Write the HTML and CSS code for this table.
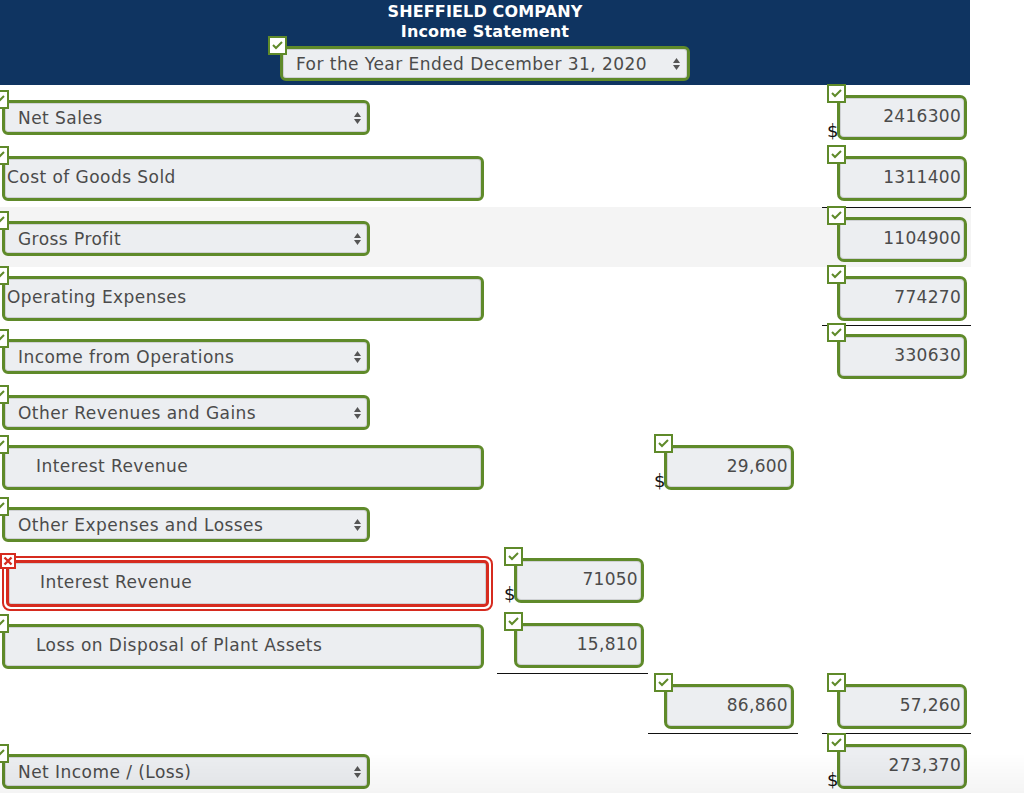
FILE: index.html
```html
<!DOCTYPE html>
<html>
<head>
<meta charset="utf-8">
<title>Sheffield Company Income Statement</title>
<link rel="stylesheet" href="styles.css">
</head>
<body>
<div class="sheet">
  <header class="hd">
    <div class="hd-title">SHEFFIELD COMPANY</div>
    <div class="hd-title">Income Statement</div>
    <div class="hd-row">
      <div class="field select sel-date">
        <svg class="badge" width="19" height="19" viewBox="0 0 19 19"><rect x="1" y="1" width="17" height="17" fill="#fff" stroke="#5f8a2a" stroke-width="2"/><polyline points="5,9 8,12 14,6" fill="none" stroke="#5f8a2a" stroke-width="2"/></svg>
        <span>For the Year Ended December 31, 2020</span>
        <svg class="arr" width="7" height="12" viewBox="0 0 7 12"><polygon points="0,5 3.5,0 7,5" fill="#555"/><polygon points="0,7 7,7 3.5,12" fill="#555"/></svg>
      </div>
    </div>
  </header>

  <div class="row r1">
    <div class="cell a">
      <div class="field select">
        <svg class="badge" width="19" height="19" viewBox="0 0 19 19"><rect x="1" y="1" width="17" height="17" fill="#fff" stroke="#5f8a2a" stroke-width="2"/><polyline points="5,9 8,12 14,6" fill="none" stroke="#5f8a2a" stroke-width="2"/></svg>
        <span>Net Sales</span>
        <svg class="arr" width="7" height="12" viewBox="0 0 7 12"><polygon points="0,5 3.5,0 7,5" fill="#555"/><polygon points="0,7 7,7 3.5,12" fill="#555"/></svg>
      </div>
    </div>
    <div class="cell b"></div>
    <div class="cell c"></div>
    <div class="gap"></div>
    <div class="cell d">
      <div class="num">
        <svg class="badge nb" width="19" height="19" viewBox="0 0 19 19"><rect x="1" y="1" width="17" height="17" fill="#fff" stroke="#5f8a2a" stroke-width="2"/><polyline points="5,9 8,12 14,6" fill="none" stroke="#5f8a2a" stroke-width="2"/></svg>
        <span class="dollar">$</span>2416300
      </div>
    </div>
  </div>

  <div class="row r2">
    <div class="cell a">
      <div class="field input">
        <svg class="badge" width="19" height="19" viewBox="0 0 19 19"><rect x="1" y="1" width="17" height="17" fill="#fff" stroke="#5f8a2a" stroke-width="2"/><polyline points="5,9 8,12 14,6" fill="none" stroke="#5f8a2a" stroke-width="2"/></svg>
        <span>Cost of Goods Sold</span>
      </div>
    </div>
    <div class="cell b"></div>
    <div class="cell c"></div>
    <div class="gap"></div>
    <div class="cell d">
      <div class="num">
        <svg class="badge nb" width="19" height="19" viewBox="0 0 19 19"><rect x="1" y="1" width="17" height="17" fill="#fff" stroke="#5f8a2a" stroke-width="2"/><polyline points="5,9 8,12 14,6" fill="none" stroke="#5f8a2a" stroke-width="2"/></svg>
        1311400
      </div>
    </div>
  </div>

  <div class="row r3 band">
    <div class="cell a">
      <div class="field select">
        <svg class="badge" width="19" height="19" viewBox="0 0 19 19"><rect x="1" y="1" width="17" height="17" fill="#fff" stroke="#5f8a2a" stroke-width="2"/><polyline points="5,9 8,12 14,6" fill="none" stroke="#5f8a2a" stroke-width="2"/></svg>
        <span>Gross Profit</span>
        <svg class="arr" width="7" height="12" viewBox="0 0 7 12"><polygon points="0,5 3.5,0 7,5" fill="#555"/><polygon points="0,7 7,7 3.5,12" fill="#555"/></svg>
      </div>
    </div>
    <div class="cell b"></div>
    <div class="cell c"></div>
    <div class="gap"></div>
    <div class="cell d rule-top">
      <div class="num">
        <svg class="badge nb" width="19" height="19" viewBox="0 0 19 19"><rect x="1" y="1" width="17" height="17" fill="#fff" stroke="#5f8a2a" stroke-width="2"/><polyline points="5,9 8,12 14,6" fill="none" stroke="#5f8a2a" stroke-width="2"/></svg>
        1104900
      </div>
    </div>
  </div>

  <div class="row r4">
    <div class="cell a">
      <div class="field input">
        <svg class="badge" width="19" height="19" viewBox="0 0 19 19"><rect x="1" y="1" width="17" height="17" fill="#fff" stroke="#5f8a2a" stroke-width="2"/><polyline points="5,9 8,12 14,6" fill="none" stroke="#5f8a2a" stroke-width="2"/></svg>
        <span>Operating Expenses</span>
      </div>
    </div>
    <div class="cell b"></div>
    <div class="cell c"></div>
    <div class="gap"></div>
    <div class="cell d">
      <div class="num">
        <svg class="badge nb" width="19" height="19" viewBox="0 0 19 19"><rect x="1" y="1" width="17" height="17" fill="#fff" stroke="#5f8a2a" stroke-width="2"/><polyline points="5,9 8,12 14,6" fill="none" stroke="#5f8a2a" stroke-width="2"/></svg>
        774270
      </div>
    </div>
  </div>

  <div class="row r5">
    <div class="cell a">
      <div class="field select">
        <svg class="badge" width="19" height="19" viewBox="0 0 19 19"><rect x="1" y="1" width="17" height="17" fill="#fff" stroke="#5f8a2a" stroke-width="2"/><polyline points="5,9 8,12 14,6" fill="none" stroke="#5f8a2a" stroke-width="2"/></svg>
        <span>Income from Operations</span>
        <svg class="arr" width="7" height="12" viewBox="0 0 7 12"><polygon points="0,5 3.5,0 7,5" fill="#555"/><polygon points="0,7 7,7 3.5,12" fill="#555"/></svg>
      </div>
    </div>
    <div class="cell b"></div>
    <div class="cell c"></div>
    <div class="gap"></div>
    <div class="cell d rule-top">
      <div class="num">
        <svg class="badge nb" width="19" height="19" viewBox="0 0 19 19"><rect x="1" y="1" width="17" height="17" fill="#fff" stroke="#5f8a2a" stroke-width="2"/><polyline points="5,9 8,12 14,6" fill="none" stroke="#5f8a2a" stroke-width="2"/></svg>
        330630
      </div>
    </div>
  </div>

  <div class="row r6">
    <div class="cell a">
      <div class="field select">
        <svg class="badge" width="19" height="19" viewBox="0 0 19 19"><rect x="1" y="1" width="17" height="17" fill="#fff" stroke="#5f8a2a" stroke-width="2"/><polyline points="5,9 8,12 14,6" fill="none" stroke="#5f8a2a" stroke-width="2"/></svg>
        <span>Other Revenues and Gains</span>
        <svg class="arr" width="7" height="12" viewBox="0 0 7 12"><polygon points="0,5 3.5,0 7,5" fill="#555"/><polygon points="0,7 7,7 3.5,12" fill="#555"/></svg>
      </div>
    </div>
    <div class="cell b"></div>
    <div class="cell c"></div>
    <div class="gap"></div>
    <div class="cell d"></div>
  </div>

  <div class="row r7">
    <div class="cell a">
      <div class="field input indent">
        <svg class="badge" width="19" height="19" viewBox="0 0 19 19"><rect x="1" y="1" width="17" height="17" fill="#fff" stroke="#5f8a2a" stroke-width="2"/><polyline points="5,9 8,12 14,6" fill="none" stroke="#5f8a2a" stroke-width="2"/></svg>
        <span>Interest Revenue</span>
      </div>
    </div>
    <div class="cell b"></div>
    <div class="cell c">
      <div class="num">
        <svg class="badge nb" width="19" height="19" viewBox="0 0 19 19"><rect x="1" y="1" width="17" height="17" fill="#fff" stroke="#5f8a2a" stroke-width="2"/><polyline points="5,9 8,12 14,6" fill="none" stroke="#5f8a2a" stroke-width="2"/></svg>
        <span class="dollar">$</span>29,600
      </div>
    </div>
    <div class="gap"></div>
    <div class="cell d"></div>
  </div>

  <div class="row r8">
    <div class="cell a">
      <div class="field select">
        <svg class="badge" width="19" height="19" viewBox="0 0 19 19"><rect x="1" y="1" width="17" height="17" fill="#fff" stroke="#5f8a2a" stroke-width="2"/><polyline points="5,9 8,12 14,6" fill="none" stroke="#5f8a2a" stroke-width="2"/></svg>
        <span>Other Expenses and Losses</span>
        <svg class="arr" width="7" height="12" viewBox="0 0 7 12"><polygon points="0,5 3.5,0 7,5" fill="#555"/><polygon points="0,7 7,7 3.5,12" fill="#555"/></svg>
      </div>
    </div>
    <div class="cell b"></div>
    <div class="cell c"></div>
    <div class="gap"></div>
    <div class="cell d"></div>
  </div>

  <div class="row r9">
    <div class="cell a">
      <div class="bad">
        <svg class="badge-x" width="16" height="16" viewBox="0 0 16 16"><rect x="1" y="1" width="14" height="14" fill="#fff" stroke="#d62b1f" stroke-width="2"/><path d="M4.5 4.5 L11.5 11.5 M11.5 4.5 L4.5 11.5" stroke="#d62b1f" stroke-width="2.4"/></svg>
        <div class="bad-in"><span>Interest Revenue</span></div>
      </div>
    </div>
    <div class="cell b">
      <div class="num up3">
        <svg class="badge nb" width="19" height="19" viewBox="0 0 19 19"><rect x="1" y="1" width="17" height="17" fill="#fff" stroke="#5f8a2a" stroke-width="2"/><polyline points="5,9 8,12 14,6" fill="none" stroke="#5f8a2a" stroke-width="2"/></svg>
        <span class="dollar">$</span>71050
      </div>
    </div>
    <div class="cell c"></div>
    <div class="gap"></div>
    <div class="cell d"></div>
  </div>

  <div class="row r10">
    <div class="cell a">
      <div class="field input indent">
        <svg class="badge" width="19" height="19" viewBox="0 0 19 19"><rect x="1" y="1" width="17" height="17" fill="#fff" stroke="#5f8a2a" stroke-width="2"/><polyline points="5,9 8,12 14,6" fill="none" stroke="#5f8a2a" stroke-width="2"/></svg>
        <span>Loss on Disposal of Plant Assets</span>
      </div>
    </div>
    <div class="cell b rule-bottom">
      <div class="num">
        <svg class="badge nb" width="19" height="19" viewBox="0 0 19 19"><rect x="1" y="1" width="17" height="17" fill="#fff" stroke="#5f8a2a" stroke-width="2"/><polyline points="5,9 8,12 14,6" fill="none" stroke="#5f8a2a" stroke-width="2"/></svg>
        15,810
      </div>
    </div>
    <div class="cell c"></div>
    <div class="gap"></div>
    <div class="cell d"></div>
  </div>

  <div class="row r11">
    <div class="cell a"></div>
    <div class="cell b"></div>
    <div class="cell c rule-bottom">
      <div class="num">
        <svg class="badge nb" width="19" height="19" viewBox="0 0 19 19"><rect x="1" y="1" width="17" height="17" fill="#fff" stroke="#5f8a2a" stroke-width="2"/><polyline points="5,9 8,12 14,6" fill="none" stroke="#5f8a2a" stroke-width="2"/></svg>
        86,860
      </div>
    </div>
    <div class="gap"></div>
    <div class="cell d rule-bottom">
      <div class="num">
        <svg class="badge nb" width="19" height="19" viewBox="0 0 19 19"><rect x="1" y="1" width="17" height="17" fill="#fff" stroke="#5f8a2a" stroke-width="2"/><polyline points="5,9 8,12 14,6" fill="none" stroke="#5f8a2a" stroke-width="2"/></svg>
        57,260
      </div>
    </div>
  </div>

  <div class="row r12">
    <div class="cell a">
      <div class="field select">
        <svg class="badge" width="19" height="19" viewBox="0 0 19 19"><rect x="1" y="1" width="17" height="17" fill="#fff" stroke="#5f8a2a" stroke-width="2"/><polyline points="5,9 8,12 14,6" fill="none" stroke="#5f8a2a" stroke-width="2"/></svg>
        <span>Net Income / (Loss)</span>
        <svg class="arr" width="7" height="12" viewBox="0 0 7 12"><polygon points="0,5 3.5,0 7,5" fill="#555"/><polygon points="0,7 7,7 3.5,12" fill="#555"/></svg>
      </div>
    </div>
    <div class="cell b"></div>
    <div class="cell c"></div>
    <div class="gap"></div>
    <div class="cell d">
      <div class="num">
        <svg class="badge nb" width="19" height="19" viewBox="0 0 19 19"><rect x="1" y="1" width="17" height="17" fill="#fff" stroke="#5f8a2a" stroke-width="2"/><polyline points="5,9 8,12 14,6" fill="none" stroke="#5f8a2a" stroke-width="2"/></svg>
        <span class="dollar">$</span>273,370
      </div>
    </div>
  </div>
</div>
<div class="fade"></div>
</body>
</html>
```

FILE: styles.css
```css
html, body {
  margin: 0;
  padding: 0;
  background: #fff;
}

body {
  font-family: "DejaVu Sans", Verdana, sans-serif;
  color: #4b4b4b;
  font-size: 17px;
  letter-spacing: 0.45px;
  overflow: hidden;
}

.sheet {
  width: 971px;
}

/* header */
.hd {
  width: 970px;
  background: #0f3461;
  padding: 2px 0 4px;
  box-sizing: border-box;
  height: 85px;
  text-align: center;
}

.hd-title {
  color: #fff;
  font-weight: bold;
  font-size: 16px;
  line-height: 20px;
  letter-spacing: 0.15px;
}

.hd-row {
  display: flex;
  justify-content: center;
  margin-top: 4px;
}

/* generic field */
.field {
  position: relative;
  box-sizing: border-box;
  border: 3px solid #5f8a2a;
  border-radius: 6px;
  background: #eceef1;
  box-shadow: inset 0 0 0 1px #cfd1d4;
  display: flex;
  align-items: center;
  color: #4b4b4b;
  white-space: nowrap;
}

.select {
  width: 368px;
  height: 35px;
  justify-content: space-between;
  padding: 1px 6px 0 13px;
}

.sel-date {
  width: 410px;
  height: 35px;
  text-align: left;
  padding: 0 7px 0 13px;
}

.input {
  width: 482px;
  height: 45px;
  padding: 0 0 2px 2px;
}

.input.indent {
  padding-left: 31px;
}

.arr {
  flex: none;
}

.badge {
  position: absolute;
  left: -15px;
  top: -13px;
}

.badge.nb {
  left: -13px;
  top: -14px;
}

/* invalid field */
.bad {
  position: relative;
  width: 491px;
  height: 55px;
  box-sizing: border-box;
  border: 2px solid #d62b1f;
  border-radius: 8px;
  padding: 2px;
  background: #fff;
}

.bad-in {
  box-sizing: border-box;
  height: 100%;
  border: 3px solid #d62b1f;
  border-radius: 5px;
  background: #eceef1;
  box-shadow: inset 0 0 0 1px #cfd1d4;
  display: flex;
  align-items: center;
  padding: 0 0 2px 31px;
  color: #4b4b4b;
}

.badge-x {
  position: absolute;
  left: -4px;
  top: -5px;
  z-index: 2;
}

/* rows */
.row {
  display: grid;
  grid-template-columns: 497px 151px 150px 24px 149px;
}

.cell {
  display: flex;
  align-items: center;
  box-sizing: border-box;
}

.cell.a { padding-left: 2px; }
.cell.b { padding-left: 17px; }
.cell.c { padding-left: 16px; }
.cell.d { padding-left: 15px; }

.band { background: #f4f4f4; }

.rule-top { border-top: 1px solid #111; }
.rule-bottom { border-bottom: 1px solid #111; }

.r1 { height: 64px; }
.r2 { height: 58px; }
.r3 { height: 60px; }
.r3 > .cell { padding-top: 3px; }
.r4 { height: 58px; }
.r4 > .cell { padding-top: 4px; }
.r5 { height: 62px; }
.r6 { height: 50px; }
.r7 { height: 60px; }
.r8 { height: 55px; }
.r9 { height: 62px; }
.r10 { height: 60px; }
.r10 > .cell { padding-top: 4px; }
.r11 { height: 60px; }
.r11 > .cell { padding-top: 5px; }
.r12 { height: 59px; }
.r12 > .cell { align-items: flex-end; padding-bottom: 4px; }

/* number boxes */
.num {
  position: relative;
  box-sizing: border-box;
  width: 130px;
  height: 45px;
  border: 3px solid #5f8a2a;
  border-radius: 7px;
  background: #eceef1;
  box-shadow: inset 0 0 0 1px #cfd1d4;
  text-align: right;
  padding-right: 3px;
  line-height: 36px;
  color: #4b4b4b;
  letter-spacing: 0.3px;
}

.num.up3 { margin-top: -6px; }

.dollar {
  position: absolute;
  left: -13px;
  bottom: -4px;
  line-height: 20px;
  font-size: 18px;
  color: #111;
  letter-spacing: 0;
}

.fade {
  position: fixed;
  left: 0;
  right: 0;
  bottom: 0;
  height: 40px;
  background: linear-gradient(to bottom, rgba(0,0,0,0), rgba(0,0,0,0.045));
  pointer-events: none;
}
```
